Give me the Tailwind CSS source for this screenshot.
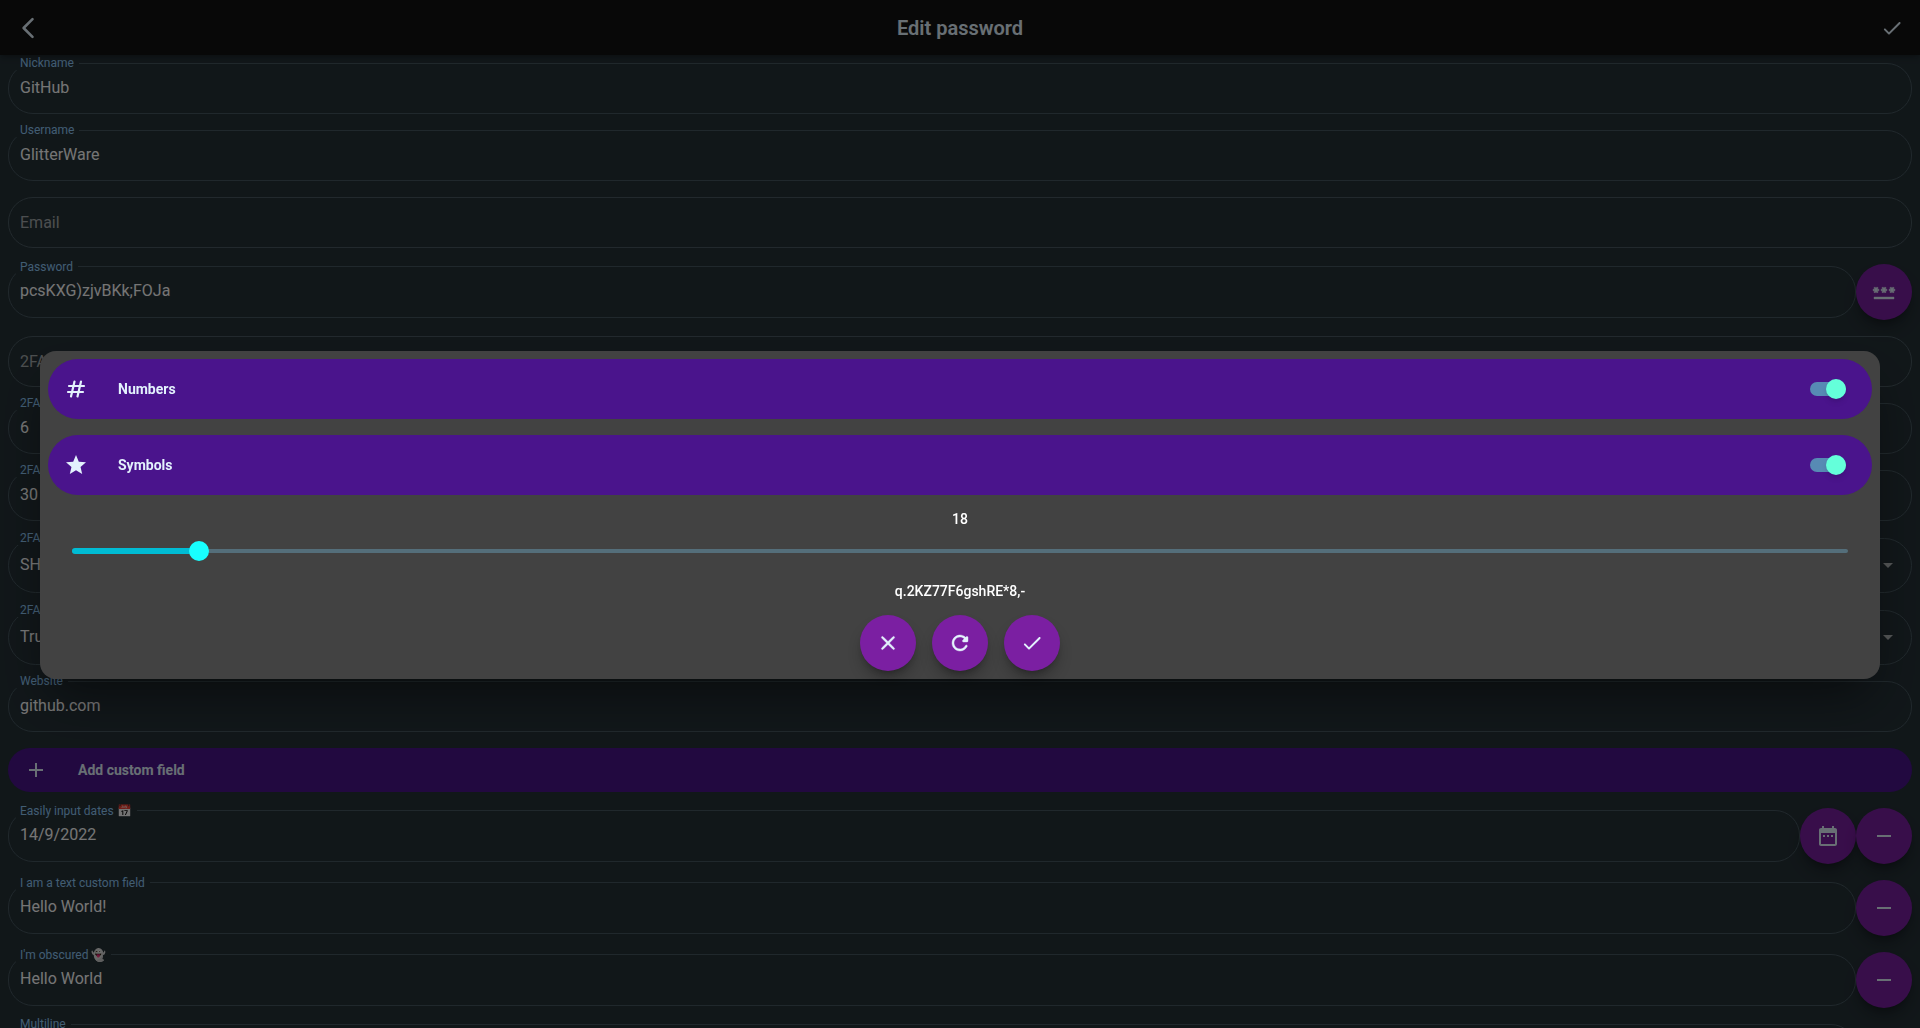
<!DOCTYPE html>
<html lang="en">
<head>
    <meta charset="UTF-8">
    <meta name="viewport" content="width=device-width, initial-scale=1.0">
    <title>Edit password</title>
    <script src="https://cdn.jsdelivr.net/npm/@tailwindcss/browser@4"></script>
</head>
<body class="flex flex-col h-screen overflow-hidden bg-[#263238] text-white font-[Roboto,sans-serif]">
    <header class="relative z-10 flex items-center justify-between shrink-0 h-[55px] px-4 bg-[#121212] text-[#e3f2fd] shadow-md shadow-black/20">
        <button type="button" aria-label="Back" class="size-6">
            <svg viewBox="0 0 24 24" class="size-6" fill="none" stroke="currentColor" stroke-width="2.6" stroke-linecap="round" stroke-linejoin="round"><path d="M16.5 3.2 7.6 12l8.9 8.8"/></svg>
        </button>
        <h1 class="text-xl font-semibold">Edit password</h1>
        <button type="button" aria-label="Save" class="size-6">
            <svg viewBox="0 0 24 24" class="size-6" fill="currentColor"><path d="M9 16.17 5.53 12.7c-.39-.39-1.02-.39-1.41 0s-.39 1.02 0 1.41l4.18 4.18c.39.39 1.02.39 1.41 0L20.29 7.71c.39-.39.39-1.02 0-1.41s-1.02-.39-1.41 0z"/></svg>
        </button>
    </header>

    <form id="editForm" class="flex flex-col flex-1 gap-4 min-h-0 p-2 overflow-hidden">
        <fieldset class="shrink-0 h-[58px] -mt-[7px] px-[7px] border border-[#475860] rounded-[25px]">
            <legend class="pl-1 pr-[5px] text-xs leading-[14px] text-[#90caf9]"><label for="nickname">Nickname</label></legend>
            <input id="nickname" type="text" value="GitHub" class="block w-full h-[34px] pl-1 text-base bg-transparent outline-none">
        </fieldset>
        <fieldset class="shrink-0 h-[58px] -mt-[7px] px-[7px] border border-[#475860] rounded-[25px]">
            <legend class="pl-1 pr-[5px] text-xs leading-[14px] text-[#90caf9]"><label for="username">Username</label></legend>
            <input id="username" type="text" value="GlitterWare" class="block w-full h-[34px] pl-1 text-base bg-transparent outline-none">
        </fieldset>
        <input id="email" type="email" placeholder="Email" aria-label="Email" class="shrink-0 h-[51px] px-[11px] text-base placeholder:text-white/60 bg-transparent border border-[#4b5b62] rounded-[25px] outline-none">
        <div class="flex items-center shrink-0 h-14">
            <fieldset class="flex-1 h-[58px] -mt-[7px] px-[7px] border border-[#475860] rounded-[25px]">
                <legend class="pl-1 pr-[5px] text-xs leading-[14px] text-[#90caf9]"><label for="password">Password</label></legend>
                <input id="password" type="text" value="pcsKXG)zjvBKk;FOJa" class="block w-full h-[34px] pl-1 text-base bg-transparent outline-none">
            </fieldset>
            <button type="button" aria-label="Generate password" class="flex items-center justify-center size-14 rounded-full bg-[#7b1fa2] text-[#e3f2fd] shadow-lg shadow-black/30">
                <svg viewBox="0 0 24 24" class="size-6" fill="currentColor" stroke="currentColor" stroke-width=".4"><path d="M2 17h20v2H2zm1.15-4.05L4 11.47l.85 1.48 1.3-.75-.85-1.48H7v-1.5H5.3l.85-1.47L4.85 7 4 8.47 3.15 7l-1.3.75.85 1.47H1v1.5h1.7l-.85 1.48zm6.7-.75 1.3.75.85-1.48.85 1.48 1.3-.75-.85-1.48H15v-1.5h-1.7l.85-1.47-1.3-.75L12 8.47 11.15 7l-1.3.75.85 1.47H9v1.5h1.7zM23 9.22h-1.7l.85-1.47-1.3-.75L20 8.47 19.15 7l-1.3.75.85 1.47H17v1.5h1.7l-.85 1.48 1.3.75.85-1.48.85 1.48 1.3-.75-.85-1.48H23z"/></svg>
            </button>
        </div>
        <input id="secret" type="text" placeholder="2FA secret" aria-label="2FA secret" class="shrink-0 h-[51px] px-[11px] text-base placeholder:text-white/60 bg-transparent border border-[#4b5b62] rounded-[25px] outline-none">
        <fieldset class="shrink-0 h-[58px] -mt-[7px] px-[7px] border border-[#475860] rounded-[25px]">
            <legend class="pl-1 pr-[5px] text-xs leading-[14px] text-[#90caf9]"><label for="digits">2FA digits</label></legend>
            <input id="digits" type="text" value="6" class="block w-full h-[34px] pl-1 text-base bg-transparent outline-none">
        </fieldset>
        <fieldset class="shrink-0 h-[58px] -mt-[7px] px-[7px] border border-[#475860] rounded-[25px]">
            <legend class="pl-1 pr-[5px] text-xs leading-[14px] text-[#90caf9]"><label for="interval">2FA interval</label></legend>
            <input id="interval" type="text" value="30" class="block w-full h-[34px] pl-1 text-base bg-transparent outline-none">
        </fieldset>
        <fieldset class="shrink-0 h-[62px] -mt-[6px] px-[7px] border border-[#475860] rounded-[28px]">
            <legend class="pl-1 pr-[5px] text-xs leading-[14px] text-[#90caf9]"><label for="algorithm">2FA algorithm</label></legend>
            <div class="flex items-center h-10 pr-1">
                <select id="algorithm" class="flex-1 pl-1 text-base appearance-none outline-none">
                    <option>SHA1</option>
                    <option>SHA256</option>
                    <option>SHA512</option>
                </select>
                <svg viewBox="0 0 24 24" class="size-6 pointer-events-none" fill="#b8bcbe"><path d="m7 10 5 5 5-5z"/></svg>
            </div>
        </fieldset>
        <fieldset class="shrink-0 h-[62px] -mt-[6px] px-[7px] border border-[#475860] rounded-[28px]">
            <legend class="pl-1 pr-[5px] text-xs leading-[14px] text-[#90caf9]"><label for="google">2FA is Google</label></legend>
            <div class="flex items-center h-10 pr-1">
                <select id="google" class="flex-1 pl-1 text-base appearance-none outline-none">
                    <option>True</option>
                    <option>False</option>
                </select>
                <svg viewBox="0 0 24 24" class="size-6 pointer-events-none" fill="#b8bcbe"><path d="m7 10 5 5 5-5z"/></svg>
            </div>
        </fieldset>
        <fieldset class="shrink-0 h-[58px] -mt-[7px] px-[7px] border border-[#475860] rounded-[25px]">
            <legend class="pl-1 pr-[5px] text-xs leading-[14px] text-[#90caf9]"><label for="website">Website</label></legend>
            <input id="website" type="text" value="github.com" class="block w-full h-[34px] pl-1 text-base bg-transparent outline-none">
        </fieldset>
        <button type="button" class="flex items-center gap-[30px] shrink-0 h-11 px-4 text-sm font-bold rounded-full bg-[#4a148c] text-[#e3f2fd]">
            <svg viewBox="0 0 24 24" class="size-6" fill="currentColor"><path d="M19 13h-6v6h-2v-6H5v-2h6V5h2v6h6z"/></svg>
            Add custom field
        </button>

        <!-- custom fields -->
        <div class="flex items-center shrink-0 h-14">
            <fieldset class="flex-1 h-[58px] -mt-[7px] px-[7px] border border-[#475860] rounded-[25px]">
                <legend class="pl-1 pr-[5px] text-xs leading-[14px] text-[#90caf9]"><label for="date">Easily input dates 📅</label></legend>
                <input id="date" type="text" value="14/9/2022" class="block w-full h-[34px] pl-1 text-base bg-transparent outline-none">
            </fieldset>
            <button type="button" aria-label="Pick date" class="flex items-center justify-center size-14 rounded-full bg-[#7b1fa2] text-[#e3f2fd] shadow-lg shadow-black/30">
                <svg viewBox="0 0 24 24" class="size-6" fill="currentColor"><path d="M9 11H7v2h2zm4 0h-2v2h2zm4 0h-2v2h2zm2-7h-1V2h-2v2H8V2H6v2H5c-1.11 0-1.99.9-1.99 2L3 20c0 1.1.89 2 2 2h14c1.1 0 2-.9 2-2V6c0-1.1-.9-2-2-2m0 16H5V9h14z"/></svg>
            </button>
            <button type="button" aria-label="Remove date" class="flex items-center justify-center size-14 rounded-full bg-[#7b1fa2] text-[#e3f2fd] shadow-lg shadow-black/30">
                <svg viewBox="0 0 24 24" class="size-6" fill="currentColor"><path d="M19 13H5v-2h14z"/></svg>
            </button>
        </div>
        <div class="flex items-center shrink-0 h-14">
            <fieldset class="flex-1 h-[58px] -mt-[7px] px-[7px] border border-[#475860] rounded-[25px]">
                <legend class="pl-1 pr-[5px] text-xs leading-[14px] text-[#90caf9]"><label for="custom">I am a text custom field</label></legend>
                <input id="custom" type="text" value="Hello World!" class="block w-full h-[34px] pl-1 text-base bg-transparent outline-none">
            </fieldset>
            <button type="button" aria-label="Remove text field" class="flex items-center justify-center size-14 rounded-full bg-[#7b1fa2] text-[#e3f2fd] shadow-lg shadow-black/30">
                <svg viewBox="0 0 24 24" class="size-6" fill="currentColor"><path d="M19 13H5v-2h14z"/></svg>
            </button>
        </div>
        <div class="flex items-center shrink-0 h-14">
            <fieldset class="flex-1 h-[58px] -mt-[7px] px-[7px] border border-[#475860] rounded-[25px]">
                <legend class="pl-1 pr-[5px] text-xs leading-[14px] text-[#90caf9]"><label for="obscured">I'm obscured 👻</label></legend>
                <input id="obscured" type="text" value="Hello World" class="block w-full h-[34px] pl-1 text-base bg-transparent outline-none">
            </fieldset>
            <button type="button" aria-label="Remove obscured field" class="flex items-center justify-center size-14 rounded-full bg-[#7b1fa2] text-[#e3f2fd] shadow-lg shadow-black/30">
                <svg viewBox="0 0 24 24" class="size-6" fill="currentColor"><path d="M19 13H5v-2h14z"/></svg>
            </button>
        </div>
        <div class="flex items-center shrink-0">
            <fieldset class="flex-1 -mt-[7px] px-[7px] border border-[#475860] rounded-[25px]">
                <legend class="pl-1 pr-[5px] text-xs leading-[14px] text-[#90caf9]"><label for="multiline">Multiline</label></legend>
                <textarea id="multiline" rows="3" class="block w-full pl-1 text-base bg-transparent outline-none resize-none"></textarea>
            </fieldset>
            <button type="button" aria-label="Remove multiline field" class="flex items-center justify-center size-14 rounded-full bg-[#7b1fa2] text-[#e3f2fd] shadow-lg shadow-black/30">
                <svg viewBox="0 0 24 24" class="size-6" fill="currentColor"><path d="M19 13H5v-2h14z"/></svg>
            </button>
        </div>
    </form>

    <!-- password generator -->
    <div class="fixed inset-0 z-20 flex items-center justify-center px-10 pt-0.5 bg-black/54">
        <div role="dialog" aria-label="Password generator" class="flex flex-col w-full p-2 rounded-2xl bg-[#424242] shadow-2xl shadow-black/50">
            <label class="flex items-center gap-[30px] h-[60px] mb-4 pl-4 pr-[26px] rounded-full bg-[#4a148c] text-[#e3f2fd] text-sm font-bold">
                <svg viewBox="0 0 24 24" class="size-6" fill="none" stroke="currentColor" stroke-width="2.2" stroke-linecap="round"><path d="M5 9h15M4 15h15M10.5 4.5l-3.5 15M17 4.5l-3.5 15"/></svg>
                <span class="flex-1">Numbers</span>
                <input type="checkbox" checked class="relative w-9 h-[14px] appearance-none rounded-full bg-gray-500 checked:bg-[#578ab4] after:absolute after:-top-[3px] after:left-0 checked:after:left-4 after:size-5 after:rounded-full after:bg-[#64ffda] after:shadow-md">
            </label>
            <label class="flex items-center gap-[30px] h-[60px] pl-4 pr-[26px] rounded-full bg-[#4a148c] text-[#e3f2fd] text-sm font-bold">
                <svg viewBox="0 0 24 24" class="size-6" fill="currentColor"><path d="M12 17.27 18.18 21l-1.64-7.03L22 9.24l-7.19-.61L12 2 9.19 8.63 2 9.24l5.46 4.73L5.82 21z"/></svg>
                <span class="flex-1">Symbols</span>
                <input type="checkbox" checked class="relative w-9 h-[14px] appearance-none rounded-full bg-gray-500 checked:bg-[#578ab4] after:absolute after:-top-[3px] after:left-0 checked:after:left-4 after:size-5 after:rounded-full after:bg-[#64ffda] after:shadow-md">
            </label>
            <label for="length" id="lengthLabel" class="pt-4 text-sm leading-4 text-center font-medium">18</label>
            <div class="grid items-center h-12 px-4">
                <div class="col-start-1 row-start-1 h-1 mx-2 rounded-full bg-[#546e7a]"></div>
                <div class="col-start-1 row-start-1 mx-2">
                    <div id="lengthBar" class="h-[6px] rounded-full bg-[#00bcd4]" style="width: 7%"></div>
                </div>
                <input id="length" type="range" min="0" max="256" value="18" class="col-start-1 row-start-1 w-full h-5 appearance-none bg-transparent [&::-webkit-slider-thumb]:appearance-none [&::-webkit-slider-thumb]:size-5 [&::-webkit-slider-thumb]:rounded-full [&::-webkit-slider-thumb]:bg-[#18ffff]">
            </div>
            <p class="pt-2 pb-4 text-sm leading-4 text-center font-medium">q.2KZ77F6gshRE*8,-</p>
            <div class="flex justify-center gap-4">
                <button type="button" aria-label="Cancel" class="flex items-center justify-center size-14 rounded-full bg-[#7b1fa2] text-[#e3f2fd] shadow-lg shadow-black/30">
                    <svg viewBox="0 0 24 24" class="size-6" fill="currentColor" stroke="currentColor" stroke-width=".4"><path d="M18.3 5.71c-.39-.39-1.02-.39-1.41 0L12 10.59 7.11 5.7c-.39-.39-1.02-.39-1.41 0s-.39 1.02 0 1.41L10.59 12 5.7 16.89c-.39.39-.39 1.02 0 1.41s1.02.39 1.41 0L12 13.41l4.89 4.89c.39.39 1.02.39 1.41 0s.39-1.02 0-1.41L13.41 12l4.89-4.89c.38-.38.38-1.02 0-1.4"/></svg>
                </button>
                <button type="button" aria-label="Regenerate" class="flex items-center justify-center size-14 rounded-full bg-[#7b1fa2] text-[#e3f2fd] shadow-lg shadow-black/30">
                    <svg viewBox="0 0 24 24" class="size-6" fill="currentColor" stroke="currentColor" stroke-width=".4"><path d="M17.65 6.35c-1.63-1.63-3.94-2.57-6.48-2.31-3.67.37-6.69 3.35-7.1 7.02C3.52 15.91 7.27 20 12 20c3.19 0 5.93-1.87 7.21-4.56.32-.67-.16-1.44-.9-1.44-.37 0-.72.2-.88.53-1.13 2.43-3.84 3.97-6.8 3.31-2.22-.49-4.01-2.3-4.48-4.52C5.31 9.44 8.26 6 12 6c1.66 0 3.14.69 4.22 1.78l-1.51 1.51c-.63.63-.19 1.71.7 1.71H19c.55 0 1-.45 1-1V6.41c0-.89-1.08-1.34-1.71-.71z"/></svg>
                </button>
                <button type="button" aria-label="Use password" class="flex items-center justify-center size-14 rounded-full bg-[#7b1fa2] text-[#e3f2fd] shadow-lg shadow-black/30">
                    <svg viewBox="0 0 24 24" class="size-6" fill="currentColor"><path d="M9 16.17 5.53 12.7c-.39-.39-1.02-.39-1.41 0s-.39 1.02 0 1.41l4.18 4.18c.39.39 1.02.39 1.41 0L20.29 7.71c.39-.39.39-1.02 0-1.41s-1.02-.39-1.41 0z"/></svg>
                </button>
            </div>
        </div>
    </div>

    <script>
        document.getElementById("length").addEventListener("input", (e) => {
            document.getElementById("lengthLabel").textContent = e.target.value;
            document.getElementById("lengthBar").style.width = `${e.target.value / 2.56}%`;
        });
    </script>
</body>
</html>
